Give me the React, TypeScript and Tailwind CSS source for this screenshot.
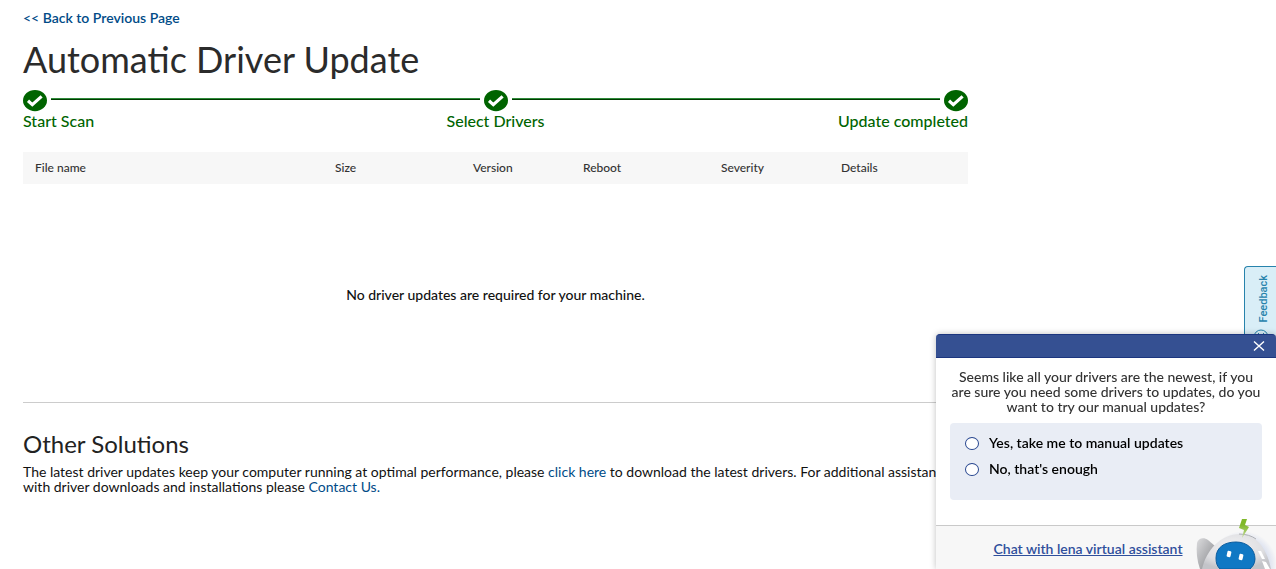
import { Fragment, useState } from "react";

const steps = [
  { label: "Start Scan", align: "text-left" },
  { label: "Select Drivers", align: "text-center" },
  { label: "Update completed", align: "text-right" },
];

const columns = [
  { label: "File name", width: "w-[300px]" },
  { label: "Size", width: "w-[138px]" },
  { label: "Version", width: "w-[110px]" },
  { label: "Reboot", width: "w-[138px]" },
  { label: "Severity", width: "w-[120px]" },
  { label: "Details", width: "" },
];

const answers = ["Yes, take me to manual updates", "No, that's enough"];

function StepCheck() {
  return (
    <svg viewBox="0 0 24 22" className="h-[22px] w-6 shrink-0" aria-hidden="true">
      <ellipse cx="12" cy="10.600" rx="12" ry="10.600" fill="#006400" />
      <path d="M5 10.800 L9.300 14.600 L18.600 6.400" fill="none" stroke="#fff" strokeWidth="3.200" />
    </svg>
  );
}

function Stepper() {
  return (
    <section aria-label="Progress">
      <div className="flex items-center">
        {steps.map((step, i) => (
          <Fragment key={step.label}>
            {i > 0 && <div className="mx-1 mb-1 h-0.5 flex-1 border-t border-[#2f8a3a] bg-[#003c00]" />}
            <StepCheck />
          </Fragment>
        ))}
      </div>
      <ol className="grid grid-cols-3 text-base leading-[18px] font-medium text-[#006400]">
        {steps.map((step) => (
          <li key={step.label} className={step.align}>
            {step.label}
          </li>
        ))}
      </ol>
    </section>
  );
}

function Robot() {
  return (
    <svg viewBox="0 0 80 52" className="absolute right-0 bottom-0 h-[52px] w-20" aria-hidden="true">
      <defs>
        <linearGradient id="ear" x1="0" y1="0" x2="1" y2="1">
          <stop offset="0" stopColor="#dcdcde" />
          <stop offset="1" stopColor="#85878b" />
        </linearGradient>
        <radialGradient id="head" cx="0.45" cy="0.35" r="0.65">
          <stop offset="0" stopColor="#f1f1f3" />
          <stop offset="0.7" stopColor="#dedee1" />
          <stop offset="1" stopColor="#c3c4c9" />
        </radialGradient>
        <radialGradient id="glow">
          <stop offset="0.6" stopColor="#cbd3ea" />
          <stop offset="1" stopColor="#cbd3ea" stopOpacity="0" />
        </radialGradient>
        <linearGradient id="bolt" x1="0" y1="0" x2="0" y2="1">
          <stop offset="0.3" stopColor="#80b82a" />
          <stop offset="1" stopColor="#c3d99c" />
        </linearGradient>
      </defs>
      <ellipse cx="47" cy="48" rx="34" ry="34" fill="url(#glow)" />
      <path d="M4 52 C1 44 0 34 1 26 C2 21 8 20 12 23 L19 29 L9 52 Z" fill="url(#ear)" />
      <path d="M6 52 C10 34 24 17 44 17 C58 17 70 28 75 52 Z" fill="url(#head)" />
      <path d="M43 17 C50 17 56 19 60 22" fill="none" stroke="#aeb0b5" />
      <path d="M62 34 L65 34 L69 42 L66 42 Z M66 44 L70 45 L74 52 L69 52 Z" fill="#fff" />
      <path d="M20 41 C20 30 29 25 40 25 C51 25 59 32 59 42 C59 47 56 50 54 52 L24 52 C21 49 20 46 20 41 Z" fill="#1078c4" stroke="#0b5c9e" />
      <rect x="31" y="34" width="4" height="6" rx="1" fill="#fff" transform="rotate(12 33 37)" />
      <rect x="43" y="37" width="4" height="6" rx="1" fill="#fff" transform="rotate(12 45 40)" />
      <path d="M46 2 L51 2 L49 8 L53 10 L46 21 L48 13 L43 11 Z" fill="url(#bolt)" />
    </svg>
  );
}

function FeedbackTab() {
  return (
    <button
      type="button"
      className="fixed top-[266px] right-0 flex h-[84px] w-8 flex-col items-center gap-1.5 rounded-tl border border-r-0 border-[#2783ac] bg-[#d9eef7] pt-2 pl-1.5 font-[Roboto,sans-serif] text-[#2783ac]"
    >
      <span className="rotate-180 text-[11px] leading-4 font-medium [writing-mode:vertical-rl]">Feedback</span>
      <svg viewBox="0 0 16 16" className="mr-1.5 size-4 shrink-0" fill="none" stroke="currentColor" aria-hidden="true">
        <circle cx="8" cy="8" r="7" />
        <path d="M5.500 4v2M10.500 4v2M4.500 9.500c1.500 3 5.500 3 7 0" />
      </svg>
    </button>
  );
}

function ChatPopup({ onClose }: { onClose: () => void }) {
  const [answer, setAnswer] = useState("");
  return (
    <aside
      aria-label="Virtual assistant"
      className="fixed right-0 bottom-0 w-[340px] rounded-t bg-white shadow-[0_0_6px_rgba(0,0,0,0.25)]"
    >
      <header className="flex h-6 items-center justify-end rounded-t border-y border-[#1c367f] bg-[#355092] pr-[11px]">
        <button type="button" aria-label="Close" onClick={onClose} className="text-white">
          <svg viewBox="0 0 12 10" className="h-2.5 w-3" fill="none" stroke="currentColor" strokeWidth="1.4" aria-hidden="true">
            <path d="M1 0.500 L11 9.500 M11 0.500 L1 9.500" />
          </svg>
        </button>
      </header>
      <div className="px-3.5 pt-[11px] pb-[25px]">
        <p className="text-center text-sm leading-[15px] font-medium whitespace-nowrap text-[#333]">
          Seems like all your drivers are the newest, if you
          <br />
          are sure you need some drivers to updates, do you
          <br />
          want to try our manual updates?
        </p>
        <fieldset className="mt-[9px] flex h-[77px] flex-col gap-1 rounded-[4px] bg-[#e9edf5] px-[15px] pt-[9px]">
          {answers.map((text) => (
            <label key={text} className="flex items-center gap-2.5 text-sm leading-[22px] font-semibold text-black">
              <input
                type="radio"
                name="answer"
                value={text}
                checked={answer === text}
                onChange={() => setAnswer(text)}
                className="h-[13px] w-3.5 appearance-none rounded-[50%] border border-[#27468f] bg-white checked:bg-[#27468f]"
              />
              {text}
            </label>
          ))}
        </fieldset>
      </div>
      <footer className="relative h-11 border-t border-[#c9c9c9] bg-[#f7f7f7] pt-2.5 text-center">
        <a href="#chat" className="mr-9 text-sm leading-[18px] font-semibold text-[#2f4f9c] underline">
          Chat with lena virtual assistant
        </a>
        <Robot />
      </footer>
    </aside>
  );
}

export default function App() {
  const [chatOpen, setChatOpen] = useState(true);
  return (
    <div className="min-h-screen bg-white font-[Lato,sans-serif] text-[#222]">
      <main className="mx-[23px] max-w-[945px] pt-2.5">
        <a href="#back" className="block text-sm leading-4 font-semibold text-[#004b87]">
          &lt;&lt; Back to Previous Page
        </a>
        <h1 className="mt-[13px] mb-[11px] text-4xl leading-10 text-[#2b2b2b]">Automatic Driver Update</h1>
        <Stepper />
        <table className="mt-[22px] w-full table-fixed text-left text-xs leading-4 text-[#333]">
          <thead className="bg-[#f7f7f7]">
            <tr className="h-8">
              {columns.map((c) => (
                <th key={c.label} scope="col" className={`pl-3 font-medium ${c.width}`}>
                  {c.label}
                </th>
              ))}
            </tr>
          </thead>
          <tbody>
            <tr>
              <td colSpan={6} className="h-[218px] pt-1 text-center text-sm leading-4 font-medium text-[#111]">
                No driver updates are required for your machine.
              </td>
            </tr>
          </tbody>
        </table>
        <hr className="border-[#ccc]" />
        <section className="pt-[27px] pb-16">
          <h2 className="text-2xl leading-7 text-[#222]">Other Solutions</h2>
          <p className="mt-1.5 text-sm leading-[15px] text-[#111]">
            The latest driver updates keep your computer running at optimal performance, please{" "}
            <a href="#drivers" className="text-[#004b87]">click here</a> to download the latest drivers. For additional assistance
            with driver downloads and installations please{" "}
            <a href="#contact" className="text-[#004b87]">Contact Us.</a>
          </p>
        </section>
      </main>
      <FeedbackTab />
      {chatOpen && <ChatPopup onClose={() => setChatOpen(false)} />}
    </div>
  );
}
